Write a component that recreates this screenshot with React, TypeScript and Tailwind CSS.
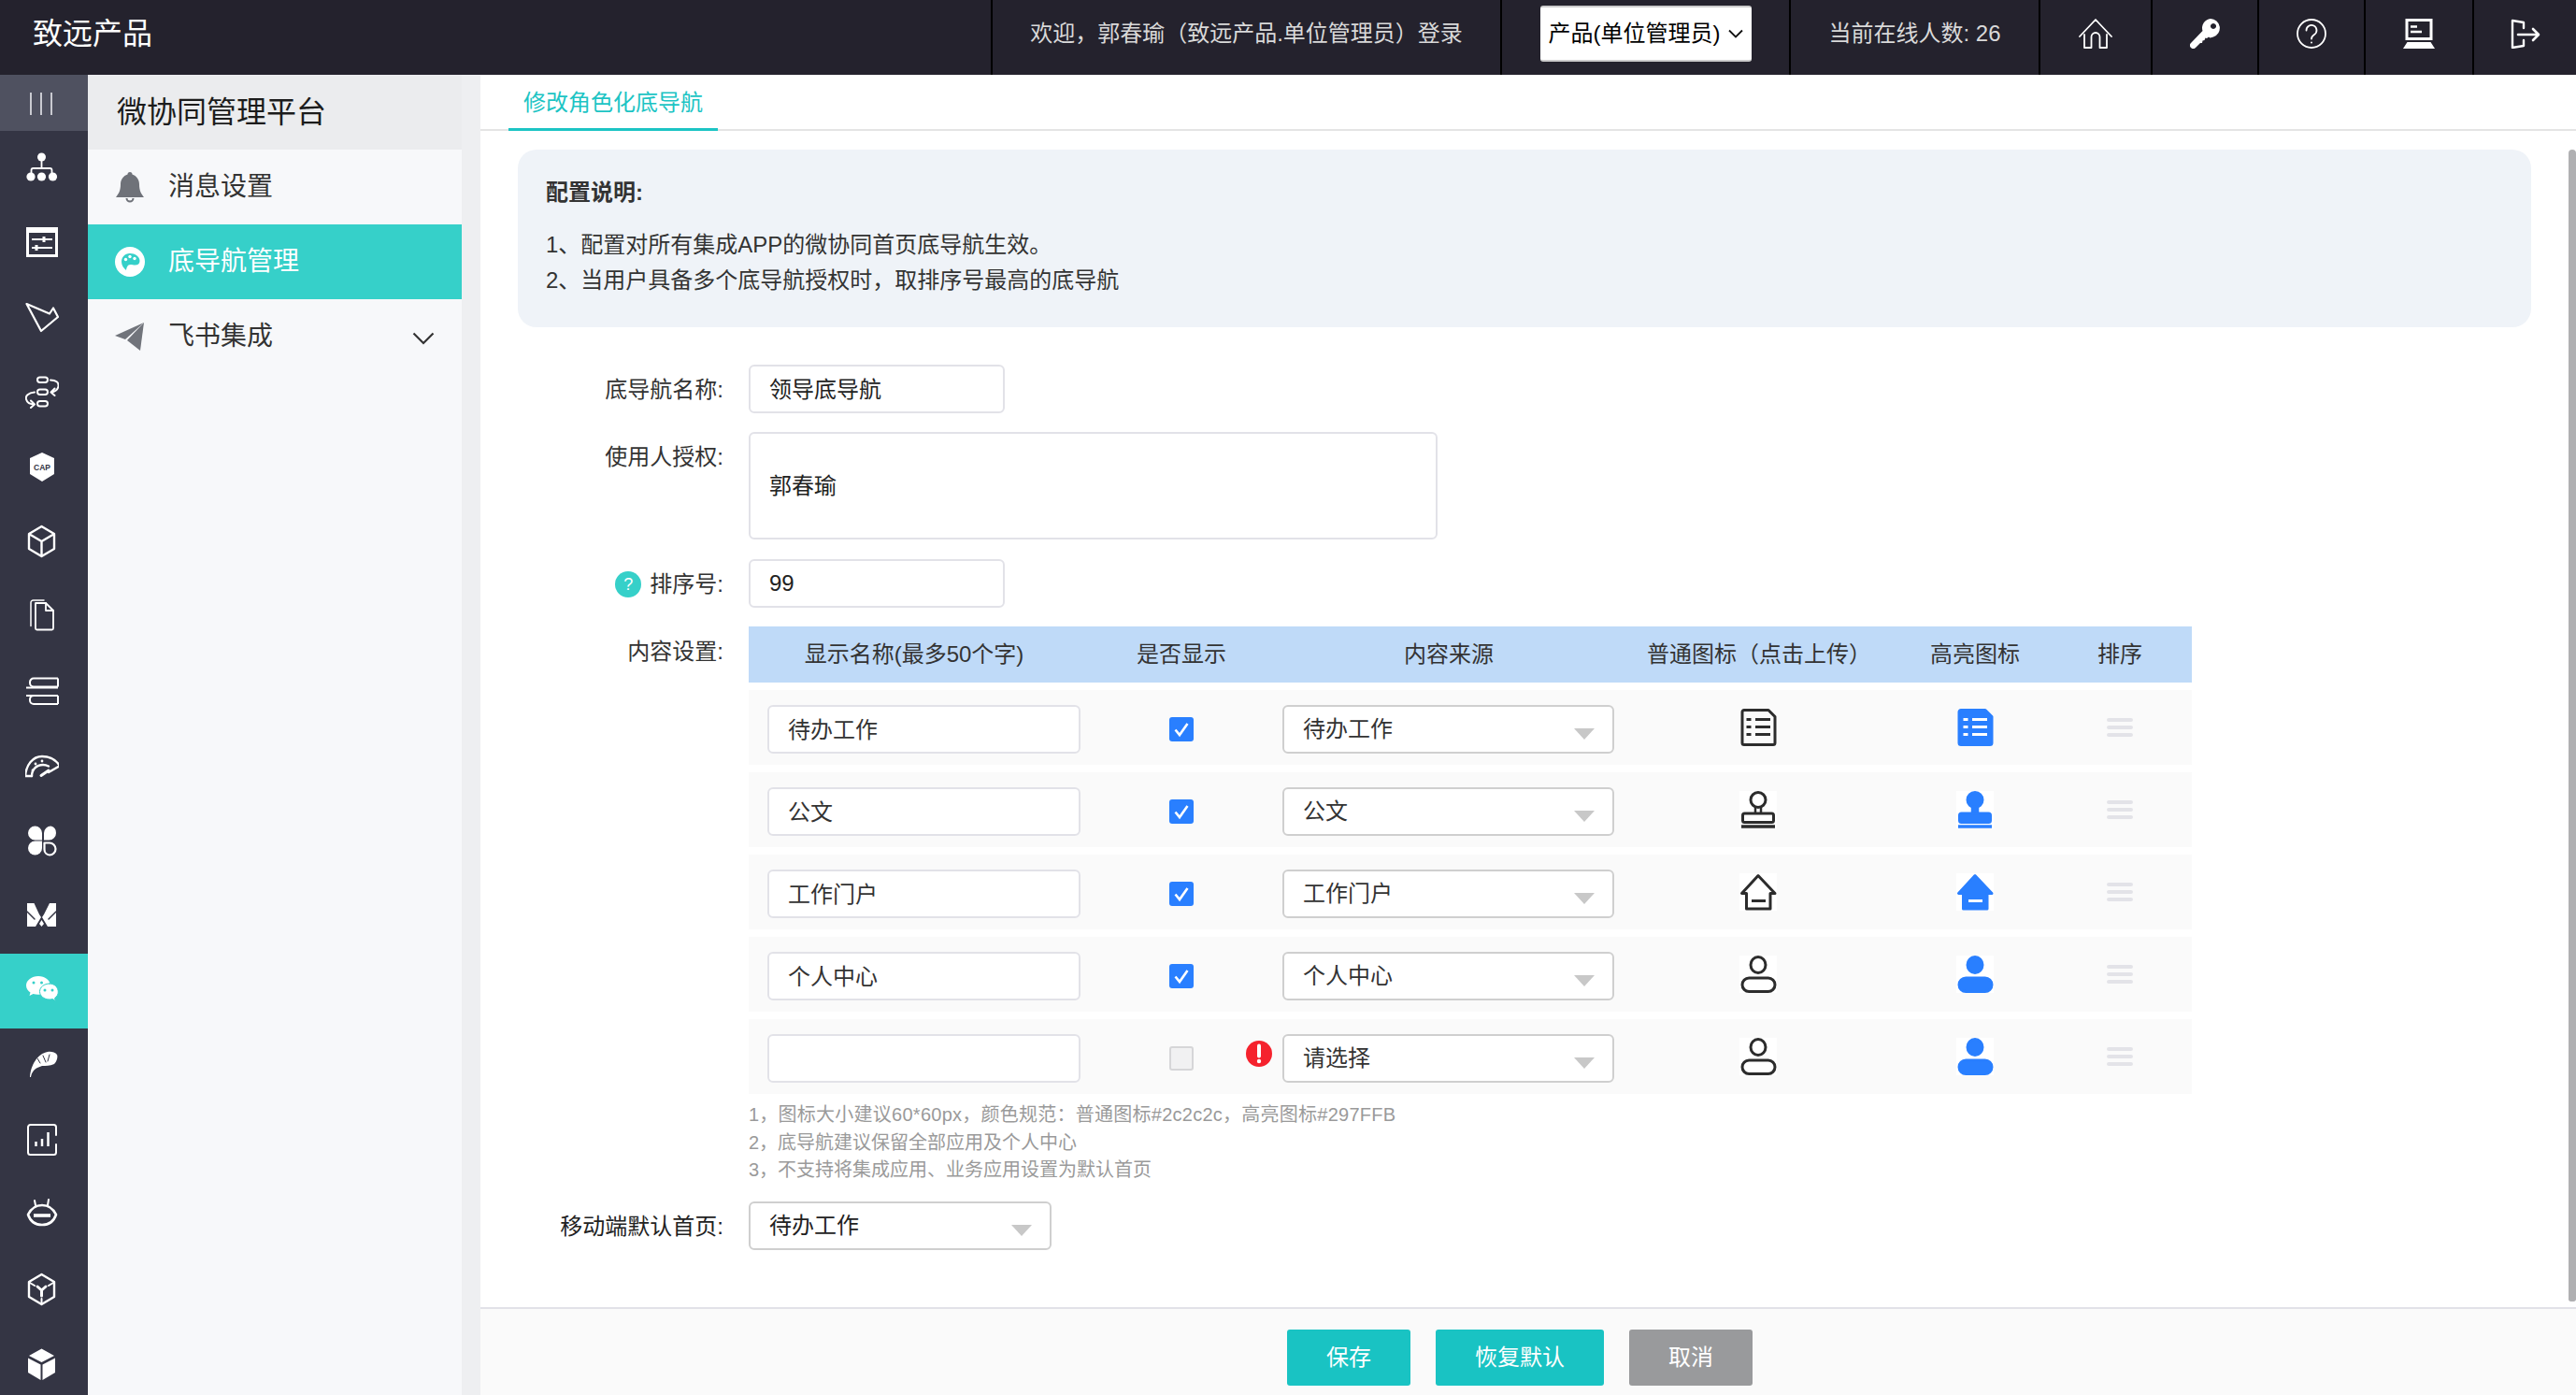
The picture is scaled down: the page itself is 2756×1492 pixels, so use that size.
import React from "react";

const D = "#343544";
const T = "#36d0c9";

function S({ children }: { children: React.ReactNode }) {
  return (
    <svg width="36" height="36" viewBox="0 0 36 36" className="flex-none" fill="none" stroke="white" strokeWidth="2.2" strokeLinejoin="round" strokeLinecap="round">
      {children}
    </svg>
  );
}

const sideIcons: React.ReactNode[] = [
  <S key="org">
    <g fill="white" stroke="none">
      <circle cx="17.5" cy="7" r="4.5" /><circle cx="6" cy="28" r="4.6" /><circle cx="17.5" cy="28" r="4.6" /><circle cx="29.5" cy="28" r="4.6" />
    </g>
    <path d="M17.5 11V19M6.5 24v-3a2 2 0 0 1 2-2h18a2 2 0 0 1 2 2v3" strokeWidth="1.8" />
  </S>,
  <S key="panel">
    <rect x="1" y="2" width="34" height="32" fill="white" stroke="none" />
    <rect x="4" y="8" width="28" height="23" fill={D} stroke="none" />
    <path d="M7 15h22M7 24h22" strokeWidth="2" strokeLinecap="butt" />
    <path d="M20 12v6M12 21v6" strokeWidth="3" strokeLinecap="butt" />
  </S>,
  <S key="plane"><path d="M1.5 4L26 14.5 30 8.5 35 18 17 33Z" /></S>,
  <S key="flow">
    <rect x="13" y="2.5" width="11" height="5.5" rx="2.7" strokeWidth="2" /><rect x="13" y="15.5" width="11" height="5.5" rx="2.7" strokeWidth="2" /><rect x="13" y="28" width="11" height="5.5" rx="2.7" strokeWidth="2" />
    <path d="M27 5.5C33 5.500 36 8 35.500 12 35 16 31 18.500 27.500 18.500M31.500 14.500L27.500 18.500 31.500 22" strokeWidth="2" />
    <path d="M10 18.500C3 19 0 23 1 26 2 30 6 31.500 10 31.500M6 27.500L10 31.500 6 35" strokeWidth="2" />
  </S>,
  <S key="cap">
    <path d="M18 3L31 9V26L18 34 5 26V9Z" fill="white" stroke="none" />
    <text x="18" y="21.5" textAnchor="middle" fontSize="8.5" fontWeight="700" fill={D} stroke="none" fontFamily="Liberation Sans">CAP</text>
  </S>,
  <S key="cube"><path d="M17.5 2L31 10V26L17.5 34 4 26V10ZM4 10L17.5 18 31 10M17.5 18V34" strokeWidth="2.4" /></S>,
  <S key="doc">
    <path d="M11 4H22L30 12V31a1.5 1.5 0 0 1-1.500 1.500H12.500A1.500 1.500 0 0 1 11 31Z" strokeWidth="1.8" />
    <path d="M22 4V12H30" strokeWidth="1.800" />
    <path d="M20 1H8.500A2.500 2.500 0 0 0 6 3.500V28.500" strokeWidth="1.500" />
  </S>,
  <S key="books">
    <path d="M35 4.500H9a4 4 0 0 0-4 4v1a4 4 0 0 0 4 4H35M35 4.500V13.500" strokeWidth="2" strokeLinecap="butt" />
    <path d="M1 14.500H35M1 23H35" strokeWidth="2" strokeLinecap="butt" />
    <path d="M35 23H9a4 4 0 0 0-4 4v1a4 4 0 0 0 4 4H35M35 23V32" strokeWidth="2" strokeLinecap="butt" />
  </S>,
  <S key="fan">
    <path d="M0 29C1 17 8 8 18 8 26 8 33 12 37 18L25 25M0 29H7" strokeWidth="2.400" />
    <path d="M7 29C7 22 12 17 19 17c2 0 4 .5 6 1.500" strokeWidth="2.400" />
    <path d="M25 23L17 28.500" strokeWidth="3" />
    <g fill="white" stroke="none"><circle cx="8" cy="23" r="1.400" /><circle cx="11" cy="16" r="1.400" /><circle cx="18" cy="13" r="1.400" /></g>
  </S>,
  <S key="clover">
    <g fill="white" stroke="none">
      <path d="M3 10a7.500 7.500 0 0 1 15 0v7.500H10.500A7.500 7.500 0 0 1 3 10Z" />
      <path d="M20 10a7.500 7.500 0 0 1 7.500-7.500h0A7.500 7.500 0 0 1 33 10a7.500 7.500 0 0 1-7.500 7.500H20Z" />
      <path d="M3 26a7.500 7.500 0 0 1 7.500-7.500H18V26a7.500 7.500 0 0 1-15 0Z" />
    </g>
    <path d="M20.500 20.500H26a6.500 6.500 0 0 1 0 13h0a6 6 0 0 1-5.500-6Z" />
  </S>,
  <S key="m">
    <g fill="white" stroke="none">
      <path d="M2 5H9.500L15 17 17 20 11 30H2Z" />
      <path d="M33 5H26L20 17 18 20 24 30H33Z" />
      <path d="M17.500 23L20 27 17.500 30 15 27Z" />
    </g>
    <path d="M2 14L10 22M33 14L25 22" stroke={D} strokeWidth="1.500" />
  </S>,
  <S key="wx">
    <g fill="white" stroke="none">
      <path d="M14 3C7 3 1 7.500 1 13c0 3 1.800 5.700 4.500 7.500L4.500 24l4-2c1.800.5 3.600.8 5.500.8C21 22.800 27 18.300 27 13S21 3 14 3Z" />
      <path d="M26 11c-6 0-10.500 4-10.500 8.500S20 28 26 28c1.200 0 2.300-.2 3.300-.5l3 2-.7-3c2.300-1.600 3.700-4 3.700-6.500C35.300 15 31.500 11 26 11Z" stroke={T} strokeWidth="1" />
    </g>
    <g fill={T} stroke="none"><circle cx="9" cy="10" r="1.500" /><circle cx="17.500" cy="10" r="1.500" /><circle cx="21" cy="18" r="1.500" /><circle cx="29" cy="18" r="1.500" /></g>
  </S>,
  <S key="feather">
    <path d="M5 31C6 18 13 6 24 4c3-.5 8 0 10 3 1 2 0 7-3 10-5 2-9 2-13 2l-5 2c-4 2-6 5-7 10Z" fill="white" stroke="none" />
    <path d="M13 11l3 5M19 8l3 7M26 7l-2 7" stroke={D} strokeWidth="1" />
  </S>,
  <S key="chart">
    <path d="M33 13V4.500A2.500 2.500 0 0 0 30.500 2H5.500A2.500 2.500 0 0 0 3 4.500V31.500A2.500 2.500 0 0 0 5.500 34H30.500A2.500 2.500 0 0 0 33 31.500V23" strokeWidth="2" />
    <path d="M11.500 20V25M18 17V25M24.500 10V25" strokeWidth="2.500" strokeLinecap="butt" />
  </S>,
  <S key="robot">
    <path d="M18 8C9 8 5 14 3 18c2 6 7 11 15 11s13-5 15-11C31 14 27 8 18 8Z" strokeWidth="2.600" />
    <path d="M9 19H27" strokeWidth="3.600" strokeLinecap="butt" />
    <path d="M11 8L10 3M24 8L25 2" strokeWidth="2" />
  </S>,
  <S key="hex">
    <path d="M17.500 2L31 10V26L17.500 34 4 26V10Z" strokeWidth="2.400" />
    <path d="M17.500 25V19L13 15M17.500 19L22 15" strokeWidth="3" />
    <path d="M5 11L10 14M30 11L25 14M17.500 33V28" strokeWidth="2" />
  </S>,
  <S key="box">
    <g fill="white" stroke="none">
      <path d="M17.500 1.500L31 9 17.500 16 4 9Z" />
      <path d="M3 11.500L16.500 18.500V35L3 27Z" />
      <path d="M32 11.500L18.500 18.500V35L32 27Z" />
    </g>
  </S>,
];

function HeaderIcon({ children, w = 36 }: { children: React.ReactNode; w?: number }) {
  return (
    <svg width={w} height="32" viewBox={`0 0 ${w} 32`} fill="none" stroke="white" strokeWidth="1.800" strokeLinejoin="round" strokeLinecap="round">
      {children}
    </svg>
  );
}

function DocIcon({ c, filled }: { c: string; filled?: boolean }) {
  return (
    <svg width="40" height="40" viewBox="0 0 40 40" fill="none">
      <path d="M5 1.500H31L38 8.500V36.500A2 2 0 0 1 36 38.500H5A2 2 0 0 1 3 36.500V3.500A2 2 0 0 1 5 1.500Z" fill={filled ? c : "none"} stroke={c} strokeWidth="3" strokeLinejoin="round" />
      <path d="M17 11.500H33M17 19.500H33M17 27.500H33M7.500 11.500H12.500M7.500 19.500H12.500M7.500 27.500H12.500" stroke={filled ? "white" : c} strokeWidth="3" />
    </svg>
  );
}
function StampIcon({ c, filled }: { c: string; filled?: boolean }) {
  return (
    <svg width="40" height="40" viewBox="0 0 40 40" fill="none" stroke={c} strokeWidth="3" className="bg-white">
      <ellipse cx="20" cy="9.500" rx="8" ry="8" fill={filled ? c : "none"} />
      <path d="M17 18V24M23 18V24" strokeWidth="2.500" />
      {filled && <path d="M17 16H23V24H17Z" fill={c} stroke="none" />}
      <rect x="3.500" y="24" width="33" height="9.500" rx="2" fill={filled ? c : "none"} />
      <path d="M2 38H38" strokeWidth="3.500" />
    </svg>
  );
}
function HouseIcon({ c, filled }: { c: string; filled?: boolean }) {
  return (
    <svg width="40" height="40" viewBox="0 0 40 40" fill="none" className="bg-white">
      <path d="M20 2.500L2.500 21.500H7.500V38H33V21.500H38Z" fill={filled ? c : "none"} stroke={c} strokeWidth="3" strokeLinejoin="round" />
      <path d="M13 29.500H28" stroke={filled ? "white" : c} strokeWidth="3" />
    </svg>
  );
}
function PersonIcon({ c, filled }: { c: string; filled?: boolean }) {
  return (
    <svg width="40" height="40" viewBox="0 0 40 40" fill="none" stroke={c} strokeWidth="3" className="bg-white">
      <ellipse cx="20" cy="10" rx="8" ry="8.500" fill={filled ? c : "none"} />
      <rect x="3" y="24" width="35" height="14.500" rx="7.200" fill={filled ? c : "none"} />
    </svg>
  );
}

const Arrow = () => <span className="absolute right-[19px] top-[23px] w-0 h-0 border-l-[11.500px] border-r-[11.500px] border-t-[12px] border-l-transparent border-r-transparent border-t-[#c8c8c8]" />;

function Select({ text, className }: { text: string; className: string }) {
  return (
    <div className={`relative h-[52px] bg-white border-2 border-[#cfcfcf] rounded-[6px] flex items-center ${className}`}>
      {text}
      <Arrow />
    </div>
  );
}

function Check({ on }: { on: boolean }) {
  return on ? (
    <span className="w-[26px] h-[26px] rounded-[3px] bg-[#297fff] flex items-center justify-center">
      <svg width="26" height="26" viewBox="0 0 26 26" fill="none"><path d="M6.500 13.500L11 19 19.500 7" stroke="white" strokeWidth="2.600" /></svg>
    </span>
  ) : (
    <span className="w-[26px] h-[26px] rounded-[3px] bg-[#f1f1f2] border-2 border-[#d6d6d8]" />
  );
}

const B = "#297FFF";
const K = "#2c2c2c";
const rows = [
  { name: "待办工作", src: "待办工作", n: <DocIcon c={K} />, h: <DocIcon c={B} filled />, on: true },
  { name: "公文", src: "公文", n: <StampIcon c={K} />, h: <StampIcon c={B} filled />, on: true },
  { name: "工作门户", src: "工作门户", n: <HouseIcon c={K} />, h: <HouseIcon c={B} filled />, on: true },
  { name: "个人中心", src: "个人中心", n: <PersonIcon c={K} />, h: <PersonIcon c={B} filled />, on: true },
  { name: "", src: "请选择", n: <PersonIcon c={K} />, h: <PersonIcon c={B} filled />, on: false },
];

const grid = "grid grid-cols-[354px_216px_358px_290px_188px_138px]";
const inputCls = "h-[52px] bg-white border-2 border-[#e2e2e8] rounded-[6px] outline-none pb-[3px]";
const labelCls = "w-[260px] h-[52px] text-right leading-[54px]";

const welcome = "欢迎\uFF0C郭春瑜\uFF08致远产品.单位管理员\uFF09登录";
const line2 = "2、当用户具备多个底导航授权时\uFF0C取排序号最高的底导航";
const upload = "普通图标\uFF08点击上传\uFF09";
const hint1 = "1\uFF0C图标大小建议60*60px\uFF0C颜色规范\uFF1A普通图标#2c2c2c\uFF0C高亮图标#297FFB";
const hint2 = "2\uFF0C底导航建议保留全部应用及个人中心";
const hint3 = "3\uFF0C不支持将集成应用、业务应用设置为默认首页";

export default function App() {
  return (
    <div className="w-[2756px] h-[1492px] overflow-hidden flex flex-col bg-white text-[24px] text-[#333] font-['Liberation_Sans','Noto_Sans_CJK_SC',sans-serif]">
      {/* top bar */}
      <header className="h-[80px] flex-none flex bg-[#24222d] text-[#d9d9d9]">
        <div className="w-[1060px] pl-[35px] pb-[8px] flex items-center text-[32px] text-white">致远产品</div>
        <div className="w-[545px] border-l-2 border-black pb-[8px] flex items-center justify-center">{welcome}</div>
        <div className="w-[309px] border-l-2 border-black pb-[8px] flex items-center justify-center">
          <div className="w-[226px] h-[60px] bg-white border-y-2 border-[#cccccc] rounded-[3px] text-black flex items-center pl-[9px]">
            产品(单位管理员)
            <svg width="16" height="10" viewBox="0 0 16 10" fill="none" className="ml-[9px]"><path d="M1 1.500L8 8.500 15 1.500" stroke="#111" strokeWidth="1.800" /></svg>
          </div>
        </div>
        <div className="w-[267px] border-l-2 border-black pb-[8px] flex items-center justify-center">当前在线人数: 26</div>
        <div className="w-[120px] border-l-2 border-black pb-[8px] flex items-center justify-center">
          <HeaderIcon><path d="M1 19L18 1 35 19M6 17V31H13.500V19.500a4.500 4.500 0 0 1 9 0V31H30V17" /></HeaderIcon>
        </div>
        <div className="w-[114px] border-l-2 border-black pb-[8px] flex items-center justify-center">
          <HeaderIcon w={32}>
            <path fillRule="evenodd" d="M22 0a10 10 0 0 1 3 19.500l-3.500 1-1.500-1-2 1.500-1.500-.5-1 2.500-2 .5-.5 2.500-2 0L6 31a3.500 3.500 0 0 1-5-5L13.500 13A10 10 0 0 1 22 0ZM25 5a3 3 0 1 0 .01 0Z" fill="white" stroke="none" />
          </HeaderIcon>
        </div>
        <div className="w-[114px] border-l-2 border-black pb-[8px] flex items-center justify-center">
          <HeaderIcon w={32}>
            <circle cx="16" cy="16" r="15" />
            <path d="M10.500 12.500a5.500 5.500 0 1 1 8.500 4.500c-2 1.300-3 2.300-3 4.500" />
            <circle cx="16" cy="25.500" r="1" fill="white" stroke="none" />
          </HeaderIcon>
        </div>
        <div className="w-[116px] border-l-2 border-black pb-[8px] flex items-center justify-center">
          <HeaderIcon w={34}>
            <rect x="4" y="1.500" width="26" height="20" strokeWidth="3" strokeLinejoin="miter" />
            <path d="M8 8.500H15M8 14H20" strokeWidth="2.500" strokeLinecap="butt" />
            <path d="M4.500 25H29.500L34 32H0Z" fill="white" stroke="none" />
          </HeaderIcon>
        </div>
        <div className="w-[111px] border-l-2 border-black pb-[8px] flex items-center justify-center">
          <HeaderIcon w={32}>
            <path d="M14 10V4L2 2V31L14 29V23" strokeWidth="2.400" />
            <path d="M8 17H29M24 11L30 17 24 23" strokeWidth="2.600" />
          </HeaderIcon>
        </div>
      </header>

      <div className="flex-1 min-h-0 flex">
        {/* icon rail */}
        <nav className="w-[94px] flex-none bg-[#343544] overflow-hidden">
          <div className="h-[60px] bg-[#4f5160] flex items-center justify-center gap-[9px] pr-[6px] pt-[2px]">
            <span className="w-[2px] h-[24px] bg-[#c9cad1]" />
            <span className="w-[2px] h-[24px] bg-[#c9cad1]" />
            <span className="w-[2px] h-[24px] bg-[#c9cad1]" />
          </div>
          {sideIcons.map((ic, i) => (
            <div key={i} className={`h-[80px] flex items-center justify-center pr-[4px] pb-[3px] ${i === 11 ? "bg-[#36d0c9]" : ""}`}>
              {ic}
            </div>
          ))}
        </nav>

        {/* menu */}
        <aside className="w-[400px] flex-none bg-[#f7f8fa]">
          <div className="h-[80px] bg-[#ebecee] pl-[31px] flex items-center text-[32px] text-[#1c1c1c]">微协同管理平台</div>
          <div className="h-[80px] pl-[31px] flex items-center text-[28px] gap-[27px]">
            <span className="w-[28px] flex justify-center">
              <svg width="30" height="34" viewBox="0 0 30 34" fill="#6f7279" className="flex-none">
                <path d="M15 1a2.500 2.500 0 0 1 2.500 2.500C22 5 25 9 25 14c0 7 2 10 5 14H0c3-4 5-7 5-14 0-5 3-9 7.500-10.500A2.500 2.500 0 0 1 15 1Z" />
                <path d="M10.500 29a4.500 4.500 0 0 0 9 0h-2a2.500 2.500 0 0 1-5 0Z" />
              </svg>
            </span>
            消息设置
          </div>
          <div className="h-[80px] pl-[31px] flex items-center text-[28px] gap-[27px] bg-[#36d0c9] text-white">
            <span className="w-[28px] flex justify-center">
              <svg width="32" height="32" viewBox="0 0 32 32" className="flex-none">
                <circle cx="16" cy="16" r="16" fill="white" />
                <path d="M16 7c-5.500 0-9 4-9 9 0 4 2.500 7 5 9 .5-3 1.500-6 4.500-6 2 0 3 .5 5 .5 3 0 5-1.500 5-4.500C26.500 10.500 21.500 7 16 7Z" fill="#36d0c9" />
                <g fill="white"><circle cx="11.500" cy="13.500" r="1.700" /><circle cx="16" cy="10.500" r="1.700" /><circle cx="21" cy="12.500" r="1.700" /></g>
              </svg>
            </span>
            底导航管理
          </div>
          <div className="h-[80px] pl-[31px] pr-[29px] flex items-center text-[28px] gap-[27px]">
            <span className="w-[28px] flex justify-center">
              <svg width="32" height="32" viewBox="0 0 32 32" fill="#71747b" className="flex-none">
                <path d="M31 1L0 15l11 4Z" />
                <path d="M31 1L13 20l14 11Z" />
              </svg>
            </span>
            <span className="flex-1">飞书集成</span>
            <svg width="24" height="14" viewBox="0 0 24 14" fill="none" className="mt-[3px]"><path d="M1.500 1.500L12 12 22.500 1.500" stroke="#333" strokeWidth="2.200" /></svg>
          </div>
        </aside>

        <div className="w-[20px] flex-none bg-[#eeeff1]" />

        {/* content */}
        <main className="flex-1 min-w-0 flex flex-col">
          <div className="h-[60px] flex-none pl-[30px] border-b-2 border-[#e4e4e4] flex">
            <div className="w-[224px] h-[60px] pt-[2px] border-b-[3px] border-[#1cc4c4] text-[#1cc4c4] flex items-center justify-center">修改角色化底导航</div>
          </div>

          <div className="relative flex-1 min-h-0 overflow-hidden pt-[20px]">
            <div className="absolute right-0 top-[20px] bottom-[6px] w-[8px] rounded-t-[6px] rounded-b-[4px] bg-[#b0b0b2]" />

            <section className="ml-[40px] mr-[48px] h-[190px] rounded-[20px] bg-[#eff3f8] pl-[30px] pt-[27px] leading-[38px]">
              <div className="font-bold">配置说明:</div>
              <div className="mt-[18px]">1、配置对所有集成APP的微协同首页底导航生效。</div>
              <div>{line2}</div>
            </section>

            <div className="mt-[40px] flex gap-[27px]">
              <label className={labelCls}>底导航名称:</label>
              <input readOnly value="领导底导航" className={`${inputCls} w-[274px] pl-[20px] text-[#222]`} />
            </div>
            <div className="mt-[20px] flex gap-[27px]">
              <label className={labelCls}>使用人授权:</label>
              <div className="w-[737px] h-[115px] bg-white border-2 border-[#e2e2e8] rounded-[6px] pl-[20px] flex items-center text-[#222]">郭春瑜</div>
            </div>
            <div className="mt-[21px] flex gap-[27px]">
              <label className="w-[260px] h-[52px] pt-[2px] flex items-center justify-end gap-[9px]">
                <span className="w-[28px] h-[28px] rounded-full bg-[#36d0c9] text-white text-[18px] flex items-center justify-center">?</span>
                排序号:
              </label>
              <input readOnly value="99" className="h-[52px] bg-white border-2 border-[#e2e2e8] rounded-[6px] outline-none w-[274px] pl-[20px] text-[#222]" />
            </div>

            <div className="mt-[20px] flex gap-[27px]">
              <label className={labelCls}>内容设置:</label>
              <div className="w-[1544px]">
                <div className={`${grid} h-[60px] bg-[#bfdaf8] items-center text-center`}>
                  <div>显示名称(最多50个字)</div>
                  <div className="pl-[2px]">是否显示</div>
                  <div>内容来源</div>
                  <div className="pl-[16px]">{upload}</div>
                  <div>高亮图标</div>
                  <div className="pr-[16px]">排序</div>
                </div>
                {rows.map((r, i) => (
                  <div key={i} className={`${grid} h-[80px] mt-[8px] bg-[#fafafa] items-center`}>
                    <div className="pl-[20px] pt-[4px]">
                      <input readOnly value={r.name} className={`${inputCls} w-[335px] pl-[20px] text-[#333]`} />
                    </div>
                    <div className="flex justify-center pl-[2px] pt-[4px]"><Check on={r.on} /></div>
                    <div className="relative pl-[1px] pt-[4px]">
                      {!r.on && (
                        <span className="absolute left-[-39px] top-[10px]">
                          <svg width="30" height="30" viewBox="0 0 30 30">
                            <circle cx="15" cy="15" r="14" fill="#f5222d" />
                            <path d="M15 6.500V17.500" stroke="white" strokeWidth="4" strokeLinecap="round" />
                            <circle cx="15" cy="23" r="2.200" fill="white" />
                          </svg>
                        </span>
                      )}
                      <Select text={r.src} className="w-[355px] pl-[20px]" />
                    </div>
                    <div className="flex justify-center pl-[14px] h-[40px]">{r.n}</div>
                    <div className="flex justify-center">{r.h}</div>
                    <div className="flex justify-center pr-[16px]">
                      <span className="w-[28px] flex flex-col gap-[4px]">
                        <span className="h-[4px] rounded-full bg-[#e3e3e8]" />
                        <span className="h-[4px] rounded-full bg-[#e3e3e8]" />
                        <span className="h-[4px] rounded-full bg-[#e3e3e8]" />
                      </span>
                    </div>
                  </div>
                ))}
                <div className="mt-[8px] h-[89px] text-[20px] leading-[29.5px] text-[#9a9a9a]">
                  <div className="tracking-[0.25px]">{hint1}</div>
                  <div>{hint2}</div>
                  <div>{hint3}</div>
                </div>
              </div>
            </div>

            <div className="mt-[18px] flex gap-[27px]">
              <label className={`${labelCls} text-[#222]`}>移动端默认首页:</label>
              <Select text="待办工作" className="w-[324px] pl-[20px] text-[#222]" />
            </div>
          </div>

          <footer className="h-[94px] flex-none border-t-2 border-[#e2e2e8] bg-[#fafafa] pr-[18px] pt-[22px] flex justify-center gap-[27px] text-white">
            <button className="w-[132px] h-[60px] rounded-[3px] bg-[#19c3c3]">保存</button>
            <button className="w-[180px] h-[60px] rounded-[3px] bg-[#19c3c3]">恢复默认</button>
            <button className="w-[132px] h-[60px] rounded-[3px] bg-[#999a9c]">取消</button>
          </footer>
        </main>
      </div>
    </div>
  );
}
